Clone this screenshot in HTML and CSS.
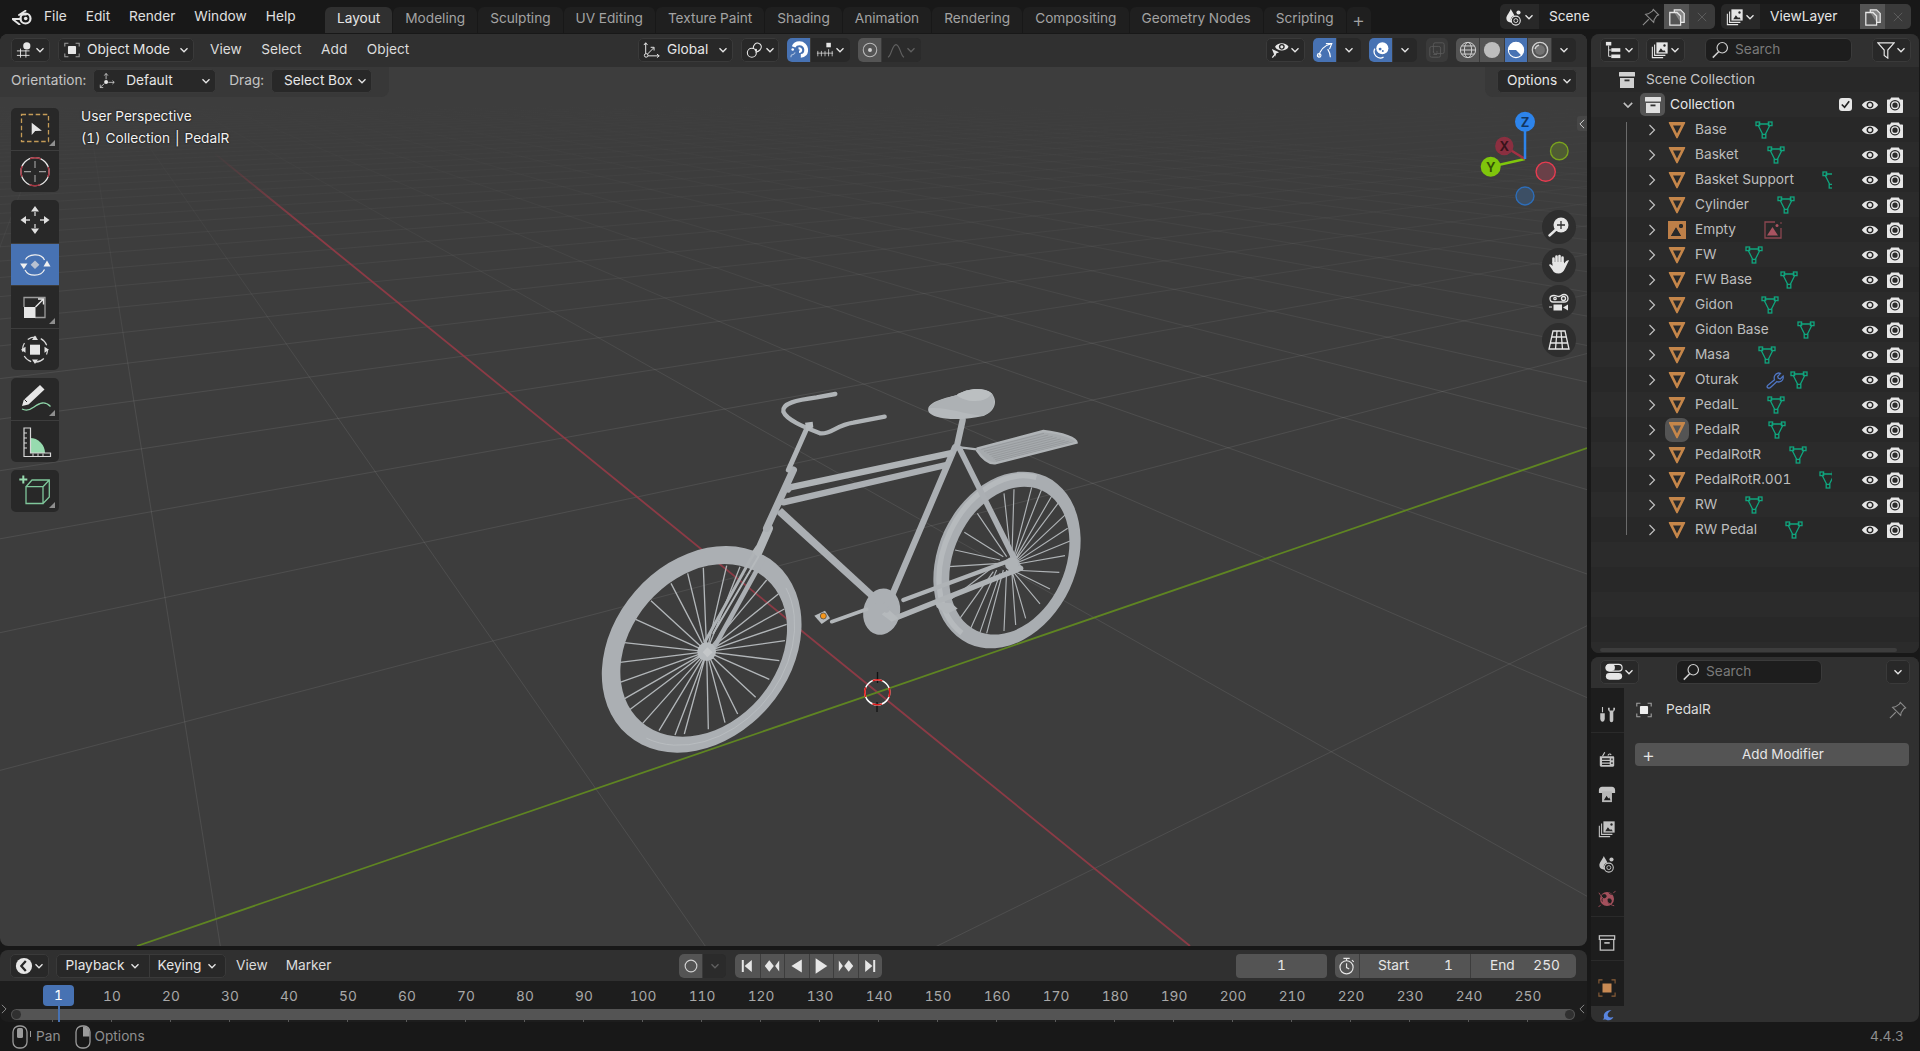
FILE: index.html
```html
<!DOCTYPE html>
<html lang="en">
<head>
<meta charset="utf-8">
<title>Blender</title>
<link rel="stylesheet" href="styles.css">
</head>
<body>
<svg class="defs" aria-hidden="true">
  <symbol id="chev-d" viewBox="0 0 10 10"><path d="M1.5 3.2 5 6.8l3.5-3.6" fill="none" stroke="currentColor" stroke-width="1.3"/></symbol>
  <symbol id="chev-r" viewBox="0 0 12 12"><path d="M3.5 1 8.5 6l-5 5" fill="none" stroke="currentColor" stroke-width="1.2"/></symbol>
  <symbol id="logo" viewBox="0 0 22 15"><circle cx="13.5" cy="8.5" r="5" fill="none" stroke="currentColor" stroke-width="2.2"/><circle cx="13.7" cy="8.5" r="1.8" fill="currentColor"/><path d="M.5 9h8M8 4.5h6M13.5 .8 7 5M.8 9.3 7.5 14.5" fill="none" stroke="currentColor" stroke-width="1.9" stroke-linecap="round"/></symbol>
  <symbol id="view3d" viewBox="0 0 20 20"><circle cx="12" cy="5.5" r="4" fill="currentColor"/><path d="M1 11h14M1 16h14M5 8.5v10M11 10v8.5" fill="none" stroke="currentColor" stroke-width="1"/></symbol>
  <symbol id="objmode" viewBox="0 0 20 20"><rect x="5.5" y="5.5" width="9" height="9" rx="1" fill="currentColor"/><path d="M2 6V2.5h4M14 2.5h4V6M18 14v3.5h-4M6 17.5H2V14" fill="none" stroke="currentColor" stroke-opacity=".6" stroke-width="1.2"/></symbol>
  <symbol id="orient" viewBox="0 0 20 20"><circle cx="9" cy="11" r="2.2" fill="currentColor"/><path d="M9 8V2M7 4l2-2.5L11 4M11.5 11.5H18M16 9.6l2 1.9-2 1.9M7 13l-4.5 4M2.5 14v3.3h3.3" fill="none" stroke="currentColor" stroke-opacity=".8" stroke-width="1"/></symbol>
  <symbol id="global" viewBox="0 0 20 20"><circle cx="3.5" cy="16" r="2" fill="none" stroke="currentColor" stroke-width="1.1"/><path d="M3 14V2M1 4.5 3 2l2 2.5M5.5 16.5H18M15.5 14.5 18 16.5l-2.5 2M5 14.5 12 7.5M8.500 7h3.800v3.600" fill="none" stroke="currentColor" stroke-width="1.1"/></symbol>
  <symbol id="pivot" viewBox="0 0 20 20"><circle cx="6.500" cy="13" r="5" fill="none" stroke="currentColor" stroke-width="1.2"/><path d="M8 8.500C8 4 11 1.500 14 2.500c3.500 1 4 5 1.500 7.500-1.200 1.200-3 2-5 2.500" fill="none" stroke="currentColor" stroke-width="1.200"/><circle cx="11" cy="10" r="1.300" fill="currentColor"/></symbol>
  <symbol id="magnet" viewBox="0 0 20 20"><path d="M12 16.500c4 0 6-3 6-6.500 0-4.500-3.500-7.500-7.500-7.500C7.500 2.500 5 4 4 6.500" fill="none" stroke="currentColor" stroke-width="4.200"/><path d="M9.500 8.500c1.500-.5 2.800 0 2.800 1.600 0 1.300-1 1.900-2.300 2" fill="none" stroke="currentColor" stroke-width="2.500"/><circle cx="3" cy="9.500" r="1.400" fill="currentColor"/><path d="M1 18c0-2 1-3 2.500-3 1 0 1-2 2.500-2" fill="none" stroke="currentColor" stroke-opacity=".55" stroke-width="1.200"/></symbol>
  <symbol id="snapgrid" viewBox="0 0 20 20"><rect x="11.500" y="2" width="5" height="5" fill="currentColor"/><path d="M1 13.500h18M2 11v6M6 11v6M10 11v6M14 9v8M18 11v6" fill="none" stroke="currentColor" stroke-opacity=".8" stroke-width="1"/></symbol>
  <symbol id="prop" viewBox="0 0 20 20"><circle cx="10" cy="10" r="7.500" fill="none" stroke="currentColor" stroke-width="1.200" stroke-opacity=".8"/><circle cx="10" cy="10" r="2.200" fill="currentColor"/></symbol>
  <symbol id="falloff" viewBox="0 0 20 20"><path d="M1 18c4-1 4.500-14 9-14s5 13 9 14" fill="none" stroke="currentColor" stroke-width="1.200"/></symbol>
  <symbol id="vis" viewBox="0 0 20 20"><path fill-rule="evenodd" d="M4.500 6.500C7 1 17 1 19.500 6.500 17 12 7 12 4.500 6.500ZM12 3.200a3.300 3.300 0 1 0 .01 0Z" fill="currentColor"/><circle cx="12" cy="6.500" r="1.700" fill="currentColor"/><path d="M1 9l8 3.500-3.200 1.500-1.300 3.500Z" fill="currentColor"/><path d="M5 14l-3.500 4.500" stroke="currentColor" stroke-width="1.500"/></symbol>
  <symbol id="gizmo" viewBox="0 0 20 20"><path d="M3 18C4 10 9 5 17 3M11 3h6.500L15 9M13 9c2 3 3 6 3 9" fill="none" stroke="currentColor" stroke-width="1.300"/><circle cx="3.500" cy="16" r="2" fill="none" stroke="currentColor" stroke-width="1.200"/></symbol>
  <symbol id="overlay" viewBox="0 0 20 20"><circle cx="11.500" cy="8" r="6.700" fill="currentColor"/><circle cx="9" cy="9" r="1.600" fill="#4772b3"/><circle cx="12" cy="11" r="1.100" fill="#4772b3"/><path d="M3.200 8.500a7 7 0 0 0 9.600 9.400" fill="none" stroke="currentColor" stroke-width="1.400"/></symbol>
  <symbol id="xray" viewBox="0 0 20 20"><rect x="6" y="2" width="12" height="12" rx="2" fill="none" stroke="currentColor"/><rect x="2" y="6" width="12" height="12" rx="2" fill="none" stroke="currentColor"/><path d="M6 11v2M10 11v2M6 15h4" stroke="currentColor"/></symbol>
  <symbol id="wire" viewBox="0 0 20 20"><g fill="none" stroke="currentColor" stroke-width="1.100"><circle cx="10" cy="10" r="8.500"/><ellipse cx="10" cy="10" rx="4" ry="8.500"/><path d="M1.500 10h17M3 5.500h14M3 14.500h14"/></g></symbol>
  <symbol id="solid" viewBox="0 0 20 20"><circle cx="10" cy="10" r="9" fill="currentColor" fill-opacity=".85"/></symbol>
  <symbol id="material" viewBox="0 0 20 20"><circle cx="10" cy="10" r="8.500" fill="none" stroke="currentColor" stroke-width="1.200"/><path d="M10 1.500a8.500 8.500 0 0 0-8.500 8.500h8.500l6 6A8.500 8.500 0 0 0 10 1.500Z" fill="currentColor"/></symbol>
  <symbol id="rendered" viewBox="0 0 20 20"><circle cx="10" cy="10" r="8.500" fill="none" stroke="currentColor" stroke-width="1.500"/><circle cx="10" cy="10" r="5.500" fill="currentColor" fill-opacity=".25"/><path d="M4.500 9a5.500 5.500 0 0 1 4.500-4.500" fill="none" stroke="currentColor" stroke-width="1.500"/></symbol>
  <symbol id="scene" viewBox="0 0 20 20"><path d="M6.500 1C5 5 1.500 8 1.500 11.500c0 3 2 4.500 4.500 4.500.5 0 1 0 1.500-.2C6.500 14.500 6.200 13 6.500 12c.4-1.500 2-3.400 4-3.800C9.500 6 7.500 3.500 6.500 1Z" fill="currentColor"/><circle cx="12" cy="14" r="5" fill="none" stroke="currentColor" stroke-width="1.200"/><circle cx="12" cy="14" r="2.200" fill="none" stroke="currentColor"/><circle cx="15" cy="5" r="2.300" fill="currentColor"/></symbol>
  <symbol id="pin" viewBox="0 0 20 20"><path d="M12.500 1.500 18.500 7.500 16.500 8.500 13.500 13 13 16 4 7 7 6.500 11.500 3.500ZM7.500 12.500 1 19" fill="none" stroke="currentColor" stroke-width="1.200"/></symbol>
  <symbol id="copy" viewBox="0 0 20 20"><path d="M7 5V2h7l4 4v10h-4" fill="currentColor" fill-opacity=".35"/><path d="M7 5V2h7l4 4v10h-4M2 5h8l4 4v10H2Z" fill="none" stroke="currentColor" stroke-width="1.400"/></symbol>
  <symbol id="xmark" viewBox="0 0 20 20"><path d="M4 4 16 16M16 4 4 16" stroke="currentColor" stroke-width="1.400"/></symbol>
  <symbol id="vlayer" viewBox="0 0 20 20"><rect x="6" y="1.500" width="12.500" height="12.500" fill="currentColor"/><path d="M8 12.500 11 8l2.500 3 1-1 2 2.500Z" fill="#282828"/><circle cx="15" cy="5" r="1.300" fill="#282828"/><path d="M4 4v12h12M1.500 6.500v12h12" fill="none" stroke="currentColor" stroke-width="1.200"/></symbol>
  <symbol id="outl" viewBox="0 0 20 20"><rect x="1" y="1" width="6" height="4" fill="currentColor"/><rect x="7" y="8" width="10" height="4" fill="currentColor"/><rect x="7" y="15" width="10" height="4" fill="currentColor"/><path d="M4 5v12h3M4 10h3" fill="none" stroke="currentColor"/></symbol>
  <symbol id="search" viewBox="0 0 20 20"><circle cx="12.500" cy="7.500" r="5.800" fill="none" stroke="currentColor" stroke-width="1.300"/><path d="M8.500 12 2 18.500" stroke="currentColor" stroke-width="1.700"/></symbol>
  <symbol id="funnel" viewBox="0 0 20 20"><path d="M1 2h18l-7 8v9l-4-3v-6Z" fill="none" stroke="currentColor" stroke-width="1.300"/></symbol>
  <symbol id="coll" viewBox="0 0 18 18"><rect x="1" y="1" width="16" height="4.500" rx=".5" fill="currentColor"/><path d="M2 7h14v10H2Z" fill="currentColor"/><rect x="6.500" y="8.500" width="5" height="1.800" fill="#303030"/></symbol>
  <symbol id="obj" viewBox="0 0 18 18"><path fill-rule="evenodd" d="M1.500 1h15c.6 0 .9.500.7 1L9.700 17c-.3.600-1.100.600-1.400 0L.8 2c-.2-.5.100-1 .7-1ZM5 4.500 9 12.500 13 4.500Z" fill="#c5864a"/></symbol>
  <symbol id="empty" viewBox="0 0 18 18"><path fill-rule="evenodd" d="M0 0h18v18H0ZM3 15h10L8 6.500Z M13 3a2 2 0 1 0 .01 0Z" fill="#bd7f48"/><path d="M8 6.500 3 15h10Z" fill="#2a2a2a"/><circle cx="13" cy="5" r="2" fill="#2a2a2a"/></symbol>
  <symbol id="meshd" viewBox="0 0 18 18"><g fill="none" stroke="#10a57e" stroke-width="1.300"><path d="M3.500 3h11M3 4l5 10M15 4l-5 10"/><rect x="1" y="1" width="3.600" height="3.600"/><rect x="13.400" y="1" width="3.600" height="3.600"/><rect x="7.200" y="13.400" width="3.600" height="3.600"/></g></symbol>
  <symbol id="imgd" viewBox="0 0 18 18"><path d="M11 1H1v16h16V7" fill="none" stroke="#8c4650" stroke-width="1.300"/><path d="M3 14.500h11L8.500 6Z" fill="#a85360"/><circle cx="13" cy="4.500" r="1.500" fill="#a85360"/><path d="M17 1v2" stroke="#8c4650"/></symbol>
  <symbol id="wrench" viewBox="0 0 18 18"><path d="M1.500 16.500c-1-1 0-2 1-2.800L8.500 8.800c-1-3 .5-6.300 4-6.800.7 0 1.500 0 2 .3l-2.800 3 .6 2 2 .6 2.800-2.800c.6 2.800-1 5.200-3.700 5.800-1 .2-1.800 0-2.500-.3L5 16c-1.200 1.200-2.500 1.500-3.500.5Z" fill="none" stroke="#4f76c4" stroke-width="1.300"/></symbol>
  <symbol id="eye" viewBox="0 0 18 18"><path fill-rule="evenodd" d="M.8 9C3.800 3.300 14.200 3.300 17.200 9 14.200 14.700 3.800 14.700.8 9ZM9 5.500a3.500 3.500 0 1 0 .01 0Z" fill="#e6e6e6"/><circle cx="9" cy="9" r="2" fill="#e6e6e6"/></symbol>
  <symbol id="cam" viewBox="0 0 18 18"><path fill-rule="evenodd" d="M1 4.500c0-.6.400-1 1-1h2l1.200-2h7.600l1.200 2h2c.6 0 1 .4 1 1V16c0 .6-.4 1-1 1H2c-.6 0-1-.4-1-1ZM9 4a5.200 5.200 0 1 0 .01 0Z" fill="#e6e6e6"/><circle cx="9" cy="9.200" r="3.300" fill="none" stroke="#e6e6e6" stroke-width="1.300"/></symbol>
  <symbol id="sel" viewBox="0 0 48 42"><rect x="10.500" y="6.500" width="27" height="27" fill="none" stroke="#c49b57" stroke-width="1.300" stroke-dasharray="4.500 2.600"/><path d="M20.700 14.700V27l3.500-4 6.700-.3Z" fill="#e6e6e6"/></symbol>
  <symbol id="cursor" viewBox="0 0 48 42"><circle cx="24" cy="20.700" r="14" fill="none" stroke="#e8e8e8" stroke-width="1.300"/><circle cx="24" cy="20.700" r="14" fill="none" stroke="#a6323f" stroke-width="1.400" stroke-dasharray="11 11" stroke-dashoffset="5.500"/><path d="M24 10v7M24 24v7M13 20.700h7M28 20.700h7" stroke="#9a9a9a" stroke-width="1.200"/></symbol>
  <symbol id="move" viewBox="0 0 48 42"><g fill="#e0e0e0"><path d="M24 6l4 5.500h-8ZM24 34l4-5.500h-8ZM9.500 20l5.500-4v8ZM38.500 20l-5.500-4v8Z"/></g><path d="M24 12v4M24 24v4M15 20h4M29 20h4" stroke="#d0d0d0" stroke-width="1.300"/></symbol>
  <symbol id="rotate" viewBox="0 0 48 42"><path d="M14.500 15.500C17 10.500 30 8 33.500 16M33.500 25.500C30 33 17.500 33 14 26" fill="none" stroke="#f0f0f0" stroke-width="1.200"/><path d="M9 19.500h7.500L12.800 25ZM32.500 22.500H39.500L36 16.500Z" fill="#f0f0f0"/><path d="M24 16.500l4.400 4.300-4.400 4.300-4.400-4.300Z" fill="#b8c1d1"/></symbol>
  <symbol id="scale" viewBox="0 0 48 42"><path d="M13 21V11.500h21V31.500H24" fill="none" stroke="#9c9c9c" stroke-width="1.300"/><rect x="13" y="21" width="11.500" height="11" fill="#e6e6e6"/><path d="M24.500 21 32 13.500M27 13h5.500v5.500" fill="none" stroke="#e6e6e6" stroke-width="1.400"/></symbol>
  <symbol id="transf" viewBox="0 0 48 42"><circle cx="24" cy="20.700" r="12.500" fill="none" stroke="#d8d8d8" stroke-width="1.200" stroke-dasharray="9 4.700" stroke-dashoffset="4"/><rect x="19" y="15.700" width="10" height="10" fill="#e6e6e6"/><path d="M24 6.500l3 4.500h-6ZM24 35l3-4.500h-6ZM10 20.700l4.500-3v6ZM38 20.700l-4.500-3v6Z" fill="#e0e0e0"/></symbol>
  <symbol id="annot" viewBox="0 0 48 42"><path d="M29 7 33.500 11.500 17.500 26.500 11 28 12.700 22Z" fill="#e6e6e6"/><path d="M16 24 13.500 21.500" stroke="#282828"/><path d="M11 31c4 2 8 1 12-2 6-4.500 11-6 16.500-.5" fill="none" stroke="#8ed4a8" stroke-width="1.300"/></symbol>
  <symbol id="measure" viewBox="0 0 48 42"><path d="M19 32V17a15 15 0 0 1 15 15Z" fill="#97dbaf"/><path d="M13 7h6.500v25H39.500v3.500H13Z" fill="none" stroke="#d8d8d8" stroke-width="1.200"/><path d="M13 12h3M13 17h3M13 22h3M13 27h3M22 35h0v-2.500M27 35v-2.500M32 35v-2.500" stroke="#d8d8d8" stroke-width="1"/></symbol>
  <symbol id="addcube" viewBox="0 0 48 42"><path d="M12.300 5.500v8M8.300 9.500h8" stroke="#97dbaf" stroke-width="2"/><path d="M15 16.700h17V33.500H15ZM15 16.700 21 10H38.300V27L32 33.500M32 16.700 38.300 10" fill="none" stroke="#7fc79b" stroke-width="1.300"/></symbol>
  <symbol id="nzoom" viewBox="0 0 22 22"><circle cx="13" cy="9" r="7.500" fill="#e6e6e6"/><path d="M13 5v8M9 9h8" stroke="#2e2e2e" stroke-width="1.300"/><path d="M7.500 14 1.500 19.500" stroke="#e6e6e6" stroke-width="2.400" stroke-linecap="round"/></symbol>
  <symbol id="nhand" viewBox="0 0 22 22"><path d="M5.500 8.500V4.500M8.500 8V2.500M11.500 8V2M14.500 8.500V3.500" stroke="#e6e6e6" stroke-width="2.600" stroke-linecap="round"/><path d="M4.500 8h11.500v1.500c2-3 4-4 5-3-1 1.500-2.500 5-4 8-1.500 3.500-3.500 5-6.500 5-3.500 0-5-1.500-6-3.500L1 11c.5-1.500 2-1 3.500 1Z" fill="#e6e6e6"/></symbol>
  <symbol id="ncam" viewBox="0 0 22 22"><g fill="none" stroke="#e6e6e6" stroke-width="1.300"><path d="M2 7.500c0-2 2-3 4-3 1.500 0 3 1 5 1s2.500-2 5-2 4 2 4 4c0 2.500-2 3.500-4 3.500H5c-2 0-3-1.500-3-3.500Z"/><circle cx="7" cy="7.500" r="1.200" /><circle cx="15.500" cy="7.500" r="2"/></g><rect x="5.500" y="13.500" width="8.500" height="6" fill="#e6e6e6"/><path d="M15 16.500l5-3v6Z" fill="#e6e6e6"/><path d="M1 16h3" stroke="#e6e6e6"/></symbol>
  <symbol id="ngrid" viewBox="0 0 22 22"><path d="M5 2h12l4 18H1ZM3.800 8h14.400M2.500 14h17M9 2 7.500 20M13 2l1.500 18" fill="none" stroke="#e6e6e6" stroke-width="1.300"/></symbol>
  <symbol id="ptool" viewBox="0 0 20 20"><path d="M5 1v6" stroke="currentColor" stroke-width="1.200"/><path d="M2.500 8h5v6c0 2-1 3.500-2.500 3.500S2.500 16 2.500 14Z" fill="currentColor"/><path d="M11 2c0 3 1 4 2 4.500v9c0 1.500 1 2.500 2 2.500s2-1 2-2.500v-9c1-.5 2-1.500 2-4.500l-2 0v3h-4v-3Z" fill="currentColor"/></symbol>
  <symbol id="prender" viewBox="0 0 20 20"><path d="M2 7h14.500c1 0 1.500.5 1.500 1.500V17c0 1-.5 1.500-1.500 1.500H3.500C2.500 18.500 2 18 2 17Z" fill="currentColor"/><path d="M4.500 10H13M4.500 13H13M4.500 16H13M15.500 9.500v2M15.500 13.500v2" stroke="#1d1d1d" stroke-width="1.500"/><path d="M5 7 7.500 2.500M11 6c1-2 3-2 3.500-.5" fill="none" stroke="currentColor" stroke-width="1.300"/></symbol>
  <symbol id="poutput" viewBox="0 0 20 20"><path d="M4.500 2h11c2 0 3.500 1.500 3.500 3.500V9H1V5.500C1 3.500 2.500 2 4.500 2Z" fill="currentColor"/><rect x="4.500" y="7" width="11" height="12" fill="#b8b8b8"/><path d="M6.500 17 9.500 12 11.500 15l1-1 1.500 3Z" fill="#1d1d1d"/></symbol>
  <symbol id="pworld" viewBox="0 0 20 20"><circle cx="10" cy="10" r="7.800" fill="#a3505c"/><path d="M4 6c2-1 4-2 5 0s-1 3-3 3-2 3-1 4M11 10c2-1 4 0 4 2s-2 4-3 3-1-3-1-5ZM12 3c1 2 3 2 4 2" stroke="#1d1d1d" fill="#1d1d1d" stroke-width=".6"/><path d="M.5 19 3 16.500M17 3.500 19.500 1M1 3c2.500 5 12 14 17 14.500" fill="none" stroke="#a3505c" stroke-width="1"/></symbol>
  <symbol id="pcoll" viewBox="0 0 20 20"><g fill="none" stroke="currentColor" stroke-width="1.400"><rect x="1.500" y="2" width="17" height="4"/><path d="M2.500 6v12h15V6"/></g><rect x="7" y="9" width="6" height="1.800" fill="currentColor"/></symbol>
  <symbol id="pobj" viewBox="0 0 20 20"><rect x="5" y="5" width="10" height="10" fill="#c88a54"/><path d="M1 5V1h4M15 1h4v4M19 15v4h-4M5 19H1v-4" fill="none" stroke="#8c5f38" stroke-width="1.200"/></symbol>
  <symbol id="pmod" viewBox="0 0 20 20"><path d="M14 1.500C8.500 1 4.500 5 5.500 9c.2 1-.5 2-1.500 3 2-.5 3-.5 4 0 3.500 1.500 7 0 8-3-2 1-5 .5-6-1s0-4.500 4-6.500Z" fill="#5885e0"/></symbol>
  <symbol id="ptoggle" viewBox="0 0 20 20"><rect x="1" y="1.500" width="18" height="7.500" rx="3.700" fill="none" stroke="currentColor" stroke-width="1.300"/><rect x="1" y="1.500" width="10" height="7.500" rx="3.700" fill="currentColor"/><rect x="1" y="11" width="18" height="7.500" rx="3.700" fill="currentColor"/></symbol>
  <symbol id="clock" viewBox="0 0 20 20"><circle cx="10" cy="10" r="9" fill="currentColor"/><path d="M12 4.500 7 10l5 5.500" fill="none" stroke="#282828" stroke-width="2.500"/></symbol>
  <symbol id="keyring" viewBox="0 0 20 20"><circle cx="10" cy="10" r="6.500" fill="none" stroke="currentColor" stroke-width="1.300"/></symbol>
  <symbol id="jumps" viewBox="0 0 20 20"><rect x="3.500" y="2.500" width="2.500" height="15" fill="currentColor"/><path d="M16 2.500v15L7 10Z" fill="currentColor"/></symbol>
  <symbol id="jumpe" viewBox="0 0 20 20"><rect x="14" y="2.500" width="2.500" height="15" fill="currentColor"/><path d="M4 2.500v15L13 10Z" fill="currentColor"/></symbol>
  <symbol id="prevk" viewBox="0 0 20 20"><path d="M7 3.500l5 6.500-5 6.500L2 10Z" fill="currentColor"/><path d="M18 4v12l-4.500-6Z" fill="currentColor"/></symbol>
  <symbol id="nextk" viewBox="0 0 20 20"><path d="M13 3.500l5 6.500-5 6.500L8 10Z" fill="currentColor"/><path d="M2 4v12l4.500-6Z" fill="currentColor"/></symbol>
  <symbol id="playr" viewBox="0 0 20 20"><path d="M16 2v16L3 10Z" fill="currentColor"/></symbol>
  <symbol id="play" viewBox="0 0 20 20"><path d="M4 1.500v17L17 10Z" fill="currentColor"/></symbol>
  <symbol id="timer" viewBox="0 0 20 20"><circle cx="9.500" cy="11.500" r="7.300" fill="none" stroke="currentColor" stroke-width="1.300"/><path d="M6 1.500h7M9.500 1.500v3M9.500 7v4.800l3 1.500M15.500 3.500l2 2" fill="none" stroke="currentColor" stroke-width="1.300"/></symbol>
  <symbol id="mousel" viewBox="0 0 20 24"><rect x="3" y="1" width="14" height="22" rx="6" fill="none" stroke="currentColor" stroke-width="1.300"/><rect x="7" y="3" width="6" height="10" rx="1.500" fill="currentColor"/></symbol>
  <symbol id="mouser" viewBox="0 0 20 24"><rect x="3" y="1" width="14" height="22" rx="6" fill="none" stroke="currentColor" stroke-width="1.300"/><path d="M10 1.500h1c3 0 5.500 2.500 5.500 5.500v4.500H10Z" fill="currentColor"/></symbol>
</svg>

<header class="topbar">
  <svg class="logo"><use href="#logo"/></svg>
  <nav class="menus">
    <span>File</span><span>Edit</span><span>Render</span><span>Window</span><span>Help</span>
  </nav>
  <nav class="tabs">
    <span class="tab active">Layout</span><span class="tab">Modeling</span><span class="tab">Sculpting</span><span class="tab">UV Editing</span><span class="tab">Texture Paint</span><span class="tab">Shading</span><span class="tab">Animation</span><span class="tab">Rendering</span><span class="tab">Compositing</span><span class="tab">Geometry Nodes</span><span class="tab">Scripting</span><span class="tab-add">+</span>
  </nav>
  <div class="scene-groups">
    <div class="sgroup">
      <span class="sicon w39"><svg class="i18"><use href="#scene"/></svg><svg class="i10"><use href="#chev-d"/></svg></span>
      <span class="sfield w125">Scene<svg class="i18 dim pinend"><use href="#pin"/></svg></span>
      <span class="scopy"><svg class="i18"><use href="#copy"/></svg></span>
      <span class="sx"><svg class="i14"><use href="#xmark"/></svg></span>
    </div>
    <div class="sgroup">
      <span class="sicon w39"><svg class="i18"><use href="#vlayer"/></svg><svg class="i10"><use href="#chev-d"/></svg></span>
      <span class="sfield w100">ViewLayer</span>
      <span class="scopy"><svg class="i18"><use href="#copy"/></svg></span>
      <span class="sx"><svg class="i14"><use href="#xmark"/></svg></span>
    </div>
  </div>
</header>

<main class="workspace">
  <div class="leftcol">
    <section class="viewport">
      <svg class="canvas" viewBox="0 34 1587 912" id="canvas">
        <defs>
          <linearGradient id="fade" gradientUnits="userSpaceOnUse" x1="0" y1="95" x2="0" y2="400">
            <stop offset="0" stop-color="#fff" stop-opacity="0"/>
            <stop offset=".3" stop-color="#fff" stop-opacity=".022"/>
            <stop offset="1" stop-color="#fff" stop-opacity=".085"/>
          </linearGradient>
          <linearGradient id="redfade" gradientUnits="userSpaceOnUse" x1="214" y1="153" x2="300" y2="223">
            <stop offset="0" stop-color="#8c3a45" stop-opacity="0"/>
            <stop offset="1" stop-color="#8c3a45"/>
          </linearGradient>
        </defs>
        <g id="grid" fill="none" stroke="url(#fade)" stroke-width="1"></g>
        <path d="M214 153 877.300 692.300 1190 946" fill="none" stroke="url(#redfade)" stroke-width="1.800"/>
        <path d="M137 946 877.300 692.300 1587 448" fill="none" stroke="#5f8522" stroke-width="1.800"/>

        <!-- rear half of the bicycle, coordinates of a 3x crop -->
        <g transform="translate(780 370) scale(.33333)">
          <path d="M695 585 672 370M695 585 702 358M695 585 755 352M695 585 785 358M695 585 817 375M695 585 838 395M695 585 857 433M695 585 863 475M695 585 870 513M695 585 855 557M695 600 838 607M695 600 810 657M695 600 780 702M695 600 737 745M695 600 707 765M680 600 672 783M670 600 620 790M660 610 600 787M650 600 570 780M640 605 535 752M640 590 510 690M660 580 507 590M660 570 525 540M670 560 553 487M680 560 592 430" stroke="#afb3b6" stroke-width="3.500" fill="none"/>
          <g transform="translate(681 570) rotate(-65)">
            <path fill-rule="evenodd" d="M-276 0A276 207 0 1 0 276 0A276 207 0 1 0 -276 0ZM-230.850 7.200A232 167 0 1 1 233.150 7.200A232 167 0 1 1 -230.850 7.200Z" fill="#a9adb1"/>
            <path d="M-256 -30A262 192 0 0 1 262 -25" fill="none" stroke="#b6babd" stroke-width="16"/>
          </g>
          <!-- rack -->
          <path d="M590 236 790 183C850 190 890 205 890 218L645 280C620 282 600 255 590 240Z" fill="#a6aaad"/>
          <path d="M604 238 792 190M612 244 805 195M620 249 818 199M628 254 830 203M635 259 842 207M640 264 854 211M645 269 866 214M648 274 878 217" stroke="#8f9295" stroke-width="2" fill="none"/>
          <path d="M590 236 790 183C850 190 890 205 890 218L645 280C620 282 600 255 590 240M540 232 590 238" stroke="#b0b4b7" stroke-width="7" fill="none"/>
          <g fill="none" stroke-linecap="round">
            <path d="M548 150 530 232" stroke="#acb0b3" stroke-width="19"/>
            <path d="M525 232 330 690" stroke="#abafb3" stroke-width="19"/>
            <path d="M30 352 510 250" stroke="#afb3b6" stroke-width="19"/>
            <path d="M10 397 498 285" stroke="#abafb3" stroke-width="19"/>
            <path d="M538 235 715 590" stroke="#abafb3" stroke-width="17"/>
            <path d="M370 690 680 575" stroke="#afb3b6" stroke-width="13"/>
          </g>
          <ellipse cx="305" cy="725" rx="55" ry="70" transform="rotate(12 305 725)" fill="#abafb3"/>
          <path d="M0 420 320 715" stroke="#abafb3" stroke-width="17"/>
          <path d="M345 745 722 595" stroke="#afb3b6" stroke-width="16" stroke-linecap="round"/>
          <path d="M305 733 325 718 355 745 335 755Z" fill="#b5b9bc"/>
          <path d="M465 697 515 700 533 716 500 732 470 712Z" fill="#b2b6b9"/>
          <circle cx="695" cy="582" r="20" fill="#afb3b6"/>
          <path d="M445 115C450 95 490 85 530 75 560 55 610 50 635 70 655 95 645 125 610 138 560 150 500 150 470 140 450 135 442 125 445 115Z" fill="#b5b9bc"/>
          <path d="M445 115C500 110 540 130 610 138 640 125 650 100 635 70 620 100 560 100 530 75 500 85 460 92 445 115Z" fill="#adb1b4"/>
          <path d="M530 75C560 100 620 100 635 70 610 50 560 55 530 75Z" fill="#bbbfc1"/>
          <path d="M103 737 135 722 150 745 125 762Z" fill="#b6babd"/>
          <path d="M155 755 260 718" stroke="#b2b6b9" stroke-width="11" stroke-linecap="round"/>
          <circle cx="130" cy="738" r="9" fill="#f5961c" stroke="#3d3d3d" stroke-width="2"/>
        </g>

        <!-- front half of the bicycle -->
        <g transform="translate(590 370) scale(.33333)">
          <path d="M350 845 340 593M350 845 293 610M350 845 243 640M350 845 183 692M350 845 137 748M350 845 103 818M350 845 90 877M350 845 90 937M350 845 100 988M350 845 118 1020M350 845 158 1060M350 845 207 1082M350 845 255 1095M350 845 283 1092M350 845 355 1078M350 845 405 1058M350 845 443 1032M350 845 497 982M350 845 538 928M350 845 568 872M350 845 585 812M350 845 590 763M350 845 583 717M350 845 565 672M350 845 530 630M350 845 450 590M350 845 410 587" stroke="#b2b6b9" stroke-width="4" fill="none"/>
          <g transform="translate(335 838) rotate(-49)">
            <path fill-rule="evenodd" d="M-340 0A340 265 0 1 0 340 0A340 265 0 1 0 -340 0ZM-283.300 6.500A285 220 0 1 1 286.700 6.500A285 220 0 1 1 -283.300 6.500Z" fill="#abafb3"/>
            <path d="M-310 50A318 248 0 0 0 305 70" fill="none" stroke="#bec2c4" stroke-width="2"/>
          </g>
          <g fill="none" stroke-linecap="round">
            <path d="M345 815 500 535" stroke="#afb3b6" stroke-width="9"/>
            <path d="M375 828 520 565" stroke="#abafb3" stroke-width="14"/>
            <path d="M370 790 505 560" stroke="#b5b9bc" stroke-width="6"/>
            <path d="M520 525 500 530 490 545" stroke="#b2b6b9" stroke-width="6"/>
            <path d="M536 475 505 545" stroke="#b2b6b9" stroke-width="26"/>
            <path d="M610 300 530 475" stroke="#abafb3" stroke-width="22"/>
            <path d="M652 172 595 300" stroke="#afb3b6" stroke-width="15"/>
            <path d="M595 360 600 352M570 430 890 720" stroke="#abafb3" stroke-width="16"/>
            <path d="M736 72 680 82C620 90 575 100 580 125 590 150 640 170 690 190 720 195 740 165 790 158L884 140" stroke="#afb3b6" stroke-width="13"/>
          </g>
          <path d="M645 158 668 155 670 172 650 185Z" fill="#b6babd"/>
          <circle cx="350" cy="845" r="28" fill="#b6babd"/>
          <path d="M352 832 368 847 352 862 338 847Z" fill="#c4c7c9"/>
        </g>

        <!-- 3D cursor -->
        <g fill="none">
          <path d="M877.500 672V683M877 702V712" stroke="#111" stroke-width="1.300"/>
          <circle cx="877.300" cy="692.300" r="12.500" stroke="#fff" stroke-width="1.500"/>
          <circle cx="877.300" cy="692.300" r="12.500" stroke="#e01818" stroke-width="1.600" stroke-dasharray="9.800 9.800" stroke-dashoffset="4.900"/>
        </g>
      </svg>

      <div class="vp-header">
        <div class="hleft">
          <button class="btn w39"><svg class="i18"><use href="#view3d"/></svg><svg class="i10"><use href="#chev-d"/></svg></button>
          <button class="btn w136"><svg class="i18"><use href="#objmode"/></svg><span class="grow">Object Mode</span><svg class="i10"><use href="#chev-d"/></svg></button>
          <span class="hm first">View</span><span class="hm">Select</span><span class="hm">Add</span><span class="hm">Object</span>
        </div>
        <div class="hcenter">
          <button class="btn w95"><svg class="i18"><use href="#global"/></svg><span class="grow">Global</span><svg class="i10"><use href="#chev-d"/></svg></button>
          <button class="btn w38"><svg class="i18"><use href="#pivot"/></svg><svg class="i10"><use href="#chev-d"/></svg></button>
          <div class="seg">
            <span class="sb w23 blue"><svg class="i18"><use href="#magnet"/></svg></span>
            <span class="sb w40"><svg class="i18"><use href="#snapgrid"/></svg><svg class="i10"><use href="#chev-d"/></svg></span>
          </div>
          <div class="seg dimmed">
            <span class="sb w23 gray"><svg class="i18"><use href="#prop"/></svg></span>
            <span class="sb w40 faint"><svg class="i18"><use href="#falloff"/></svg><svg class="i10"><use href="#chev-d"/></svg></span>
          </div>
        </div>
        <div class="hright">
          <button class="btn w39"><svg class="i18"><use href="#vis"/></svg><svg class="i10"><use href="#chev-d"/></svg></button>
          <div class="seg">
            <span class="sb w23 blue"><svg class="i18"><use href="#gizmo"/></svg></span>
            <span class="sb w25"><svg class="i10"><use href="#chev-d"/></svg></span>
          </div>
          <div class="seg">
            <span class="sb w23 blue"><svg class="i18"><use href="#overlay"/></svg></span>
            <span class="sb w25"><svg class="i10"><use href="#chev-d"/></svg></span>
          </div>
          <div class="seg x1"><span class="sb w22 xdim"><svg class="i18"><use href="#xray"/></svg></span></div>
          <div class="seg">
            <span class="sb w23 gray"><svg class="i18"><use href="#wire"/></svg></span>
            <span class="sb w25 gray"><svg class="i18"><use href="#solid"/></svg></span>
            <span class="sb w23 blue"><svg class="i18"><use href="#material"/></svg></span>
            <span class="sb w24 gray"><svg class="i18"><use href="#rendered"/></svg></span>
            <span class="sb w25"><svg class="i10"><use href="#chev-d"/></svg></span>
          </div>
        </div>
      </div>

      <div class="vp-settings">
        <div class="toolstrip">
          <span class="lbl">Orientation:</span>
          <button class="btn w123 orient-btn"><svg class="i18"><use href="#orient"/></svg><span class="grow">Default</span><svg class="i10"><use href="#chev-d"/></svg></button>
          <span class="lbl drag">Drag:</span>
          <button class="btn w101"><span class="grow">Select Box</span><svg class="i10"><use href="#chev-d"/></svg></button>
        </div>
        <div class="optstrip">
          <button class="btn w80"><span class="grow">Options</span><svg class="i10"><use href="#chev-d"/></svg></button>
        </div>
      </div>

      <div class="vp-body">
        <aside class="toolbar">
          <div class="tgroup">
            <span class="tool corner"><svg class="ti"><use href="#sel"/></svg></span>
            <span class="tool"><svg class="ti"><use href="#cursor"/></svg></span>
          </div>
          <div class="tgroup g2">
            <span class="tool"><svg class="ti"><use href="#move"/></svg></span>
            <span class="tool on"><svg class="ti"><use href="#rotate"/></svg></span>
            <span class="tool corner"><svg class="ti"><use href="#scale"/></svg></span>
            <span class="tool"><svg class="ti"><use href="#transf"/></svg></span>
          </div>
          <div class="tgroup">
            <span class="tool corner"><svg class="ti"><use href="#annot"/></svg></span>
            <span class="tool"><svg class="ti"><use href="#measure"/></svg></span>
          </div>
          <div class="tgroup">
            <span class="tool corner"><svg class="ti"><use href="#addcube"/></svg></span>
          </div>
        </aside>
        <div class="viewinfo">
          <div>User Perspective</div>
          <div class="ctx">(1) Collection | PedalR</div>
        </div>
      </div>

      <div class="gizmo">
        <svg viewBox="0 0 100 120" class="gizmo-svg">
          <path d="M35 69 0.700 76.700" stroke="#7fc60c" stroke-width="2.500"/>
          <path d="M35 69 14 56" stroke="#a33043" stroke-width="2.500"/>
          <path d="M35 69V31" stroke="#2d84eb" stroke-width="2.500"/>
          <circle cx="35" cy="31.700" r="10" fill="#2d84eb"/>
          <text x="35" y="36.500" class="gt">Z</text>
          <circle cx="14.300" cy="56" r="9.200" fill="#8b2f40"/>
          <text x="14.300" y="60.500" class="gt">X</text>
          <circle cx="0.700" cy="76.700" r="10" fill="#7fc60c"/>
          <text x="0.700" y="81.500" class="gt">Y</text>
          <circle cx="55.700" cy="81.700" r="9.600" fill="#6a4048" stroke="#e63c50" stroke-width="1.400"/>
          <circle cx="69.300" cy="61" r="8.800" fill="#4f5c33" stroke="#7aa31e" stroke-width="1.400"/>
          <circle cx="35" cy="106" r="9" fill="#3c4f65" stroke="#2d6db8" stroke-width="1.400"/>
        </svg>
      </div>
      <div class="navbtns">
        <span class="nav"><svg class="i22"><use href="#nzoom"/></svg></span>
        <span class="nav"><svg class="i22"><use href="#nhand"/></svg></span>
        <span class="nav"><svg class="i22"><use href="#ncam"/></svg></span>
        <span class="nav"><svg class="i22"><use href="#ngrid"/></svg></span>
      </div>
      <span class="sidetab"><svg class="i10"><use href="#chev-r"/></svg></span>
    </section>

    <section class="timeline">
      <div class="tl-header">
        <button class="btn w39"><svg class="i18 bright"><use href="#clock"/></svg><svg class="i10"><use href="#chev-d"/></svg></button>
        <div class="seg outline tl-menus">
          <span class="sb w92">Playback<svg class="i10"><use href="#chev-d"/></svg></span>
          <span class="sb w76">Keying<svg class="i10"><use href="#chev-d"/></svg></span>
        </div>
        <span class="hm tl-first">View</span><span class="hm tl-second">Marker</span>
        <div class="seg tl-key">
          <span class="sb w23 gray"><svg class="i18"><use href="#keyring"/></svg></span>
          <span class="sb w24 faint2"><svg class="i10"><use href="#chev-d"/></svg></span>
        </div>
        <div class="seg tl-trans">
          <span class="sb w245 gray2"><svg class="i16"><use href="#jumps"/></svg></span>
          <span class="sb w245 gray2"><svg class="i18"><use href="#prevk"/></svg></span>
          <span class="sb w245 gray2"><svg class="i16"><use href="#playr"/></svg></span>
          <span class="sb w245 gray2"><svg class="i18"><use href="#play"/></svg></span>
          <span class="sb w245 gray2"><svg class="i18"><use href="#nextk"/></svg></span>
          <span class="sb w245 gray2"><svg class="i16"><use href="#jumpe"/></svg></span>
        </div>
        <span class="frame-cur">1</span>
        <div class="seg tl-range">
          <span class="sb w24 gray2"><svg class="i18"><use href="#timer"/></svg></span>
          <span class="sb w111 gray2 spread"><span>Start</span><span>1</span></span>
          <span class="sb w106 gray2 spread"><span>End</span><span>250</span></span>
        </div>
      </div>
      <div class="tl-main">
        <div class="frames">
          <span>10</span><span>20</span><span>30</span><span>40</span><span>50</span><span>60</span><span>70</span><span>80</span><span>90</span><span>100</span><span>110</span><span>120</span><span>130</span><span>140</span><span>150</span><span>160</span><span>170</span><span>180</span><span>190</span><span>200</span><span>210</span><span>220</span><span>230</span><span>240</span><span>250</span>
        </div>
        <span class="badge">1</span>
        <span class="playhead"></span>
        <div class="hscroll"></div>
        <div class="ticks"></div>
        <svg class="i10 tl-chev-l"><use href="#chev-r"/></svg>
        <svg class="i10 tl-chev-r"><use href="#chev-r"/></svg>
      </div>
    </section>
  </div>

  <div class="rightcol">
    <section class="outliner">
      <div class="ed-header">
        <button class="btn w39"><svg class="i18"><use href="#outl"/></svg><svg class="i10"><use href="#chev-d"/></svg></button>
        <button class="btn w39 gap7"><svg class="i18"><use href="#vlayer"/></svg><svg class="i10"><use href="#chev-d"/></svg></button>
        <div class="searchbox s147 gap20"><svg class="i18"><use href="#search"/></svg><span>Search</span></div>
        <button class="btn w39 right"><svg class="i18"><use href="#funnel"/></svg><svg class="i10"><use href="#chev-d"/></svg></button>
      </div>
      <div class="tree">
        <div class="row"><svg class="i18 sc-ic"><use href="#coll"/></svg><span class="name sc">Scene Collection</span></div>
        <div class="row">
          <div class="rmain coll">
            <svg class="chev cd"><use href="#chev-d"/></svg>
            <span class="collbox"><svg class="i18"><use href="#coll"/></svg></span>
            <span class="name bright">Collection</span>
          </div>
          <div class="rend"><span class="check"><svg viewBox="0 0 14 14"><path d="M3 7 6 10 11 3.500" fill="none" stroke="#222" stroke-width="1.800"/></svg></span><svg class="i18 eye tight"><use href="#eye"/></svg><svg class="i18 cam"><use href="#cam"/></svg></div>
        </div>
        <div class="row"><div class="rmain"><svg class="chev"><use href="#chev-r"/></svg><svg class="i18"><use href="#obj"/></svg><span class="name">Base</span><svg class="i18 data"><use href="#meshd"/></svg></div><div class="rend"><svg class="i18 eye"><use href="#eye"/></svg><svg class="i18 cam"><use href="#cam"/></svg></div></div>
        <div class="row"><div class="rmain"><svg class="chev"><use href="#chev-r"/></svg><svg class="i18"><use href="#obj"/></svg><span class="name">Basket</span><svg class="i18 data"><use href="#meshd"/></svg></div><div class="rend"><svg class="i18 eye"><use href="#eye"/></svg><svg class="i18 cam"><use href="#cam"/></svg></div></div>
        <div class="row"><div class="rmain"><svg class="chev"><use href="#chev-r"/></svg><svg class="i18"><use href="#obj"/></svg><span class="name">Basket Support</span><svg class="i18 data"><use href="#meshd"/></svg></div><div class="rend"><svg class="i18 eye"><use href="#eye"/></svg><svg class="i18 cam"><use href="#cam"/></svg></div></div>
        <div class="row"><div class="rmain"><svg class="chev"><use href="#chev-r"/></svg><svg class="i18"><use href="#obj"/></svg><span class="name">Cylinder</span><svg class="i18 data"><use href="#meshd"/></svg></div><div class="rend"><svg class="i18 eye"><use href="#eye"/></svg><svg class="i18 cam"><use href="#cam"/></svg></div></div>
        <div class="row"><div class="rmain"><svg class="chev"><use href="#chev-r"/></svg><svg class="i18"><use href="#empty"/></svg><span class="name">Empty</span><svg class="i18 data"><use href="#imgd"/></svg></div><div class="rend"><svg class="i18 eye"><use href="#eye"/></svg><svg class="i18 cam"><use href="#cam"/></svg></div></div>
        <div class="row"><div class="rmain"><svg class="chev"><use href="#chev-r"/></svg><svg class="i18"><use href="#obj"/></svg><span class="name">FW</span><svg class="i18 data"><use href="#meshd"/></svg></div><div class="rend"><svg class="i18 eye"><use href="#eye"/></svg><svg class="i18 cam"><use href="#cam"/></svg></div></div>
        <div class="row"><div class="rmain"><svg class="chev"><use href="#chev-r"/></svg><svg class="i18"><use href="#obj"/></svg><span class="name">FW Base</span><svg class="i18 data"><use href="#meshd"/></svg></div><div class="rend"><svg class="i18 eye"><use href="#eye"/></svg><svg class="i18 cam"><use href="#cam"/></svg></div></div>
        <div class="row"><div class="rmain"><svg class="chev"><use href="#chev-r"/></svg><svg class="i18"><use href="#obj"/></svg><span class="name">Gidon</span><svg class="i18 data"><use href="#meshd"/></svg></div><div class="rend"><svg class="i18 eye"><use href="#eye"/></svg><svg class="i18 cam"><use href="#cam"/></svg></div></div>
        <div class="row"><div class="rmain"><svg class="chev"><use href="#chev-r"/></svg><svg class="i18"><use href="#obj"/></svg><span class="name">Gidon Base</span><svg class="i18 data"><use href="#meshd"/></svg></div><div class="rend"><svg class="i18 eye"><use href="#eye"/></svg><svg class="i18 cam"><use href="#cam"/></svg></div></div>
        <div class="row"><div class="rmain"><svg class="chev"><use href="#chev-r"/></svg><svg class="i18"><use href="#obj"/></svg><span class="name">Masa</span><svg class="i18 data"><use href="#meshd"/></svg></div><div class="rend"><svg class="i18 eye"><use href="#eye"/></svg><svg class="i18 cam"><use href="#cam"/></svg></div></div>
        <div class="row"><div class="rmain"><svg class="chev"><use href="#chev-r"/></svg><svg class="i18"><use href="#obj"/></svg><span class="name">Oturak</span><svg class="i18 data mod"><use href="#wrench"/></svg><svg class="i18 data next"><use href="#meshd"/></svg></div><div class="rend"><svg class="i18 eye"><use href="#eye"/></svg><svg class="i18 cam"><use href="#cam"/></svg></div></div>
        <div class="row"><div class="rmain"><svg class="chev"><use href="#chev-r"/></svg><svg class="i18"><use href="#obj"/></svg><span class="name">PedalL</span><svg class="i18 data"><use href="#meshd"/></svg></div><div class="rend"><svg class="i18 eye"><use href="#eye"/></svg><svg class="i18 cam"><use href="#cam"/></svg></div></div>
        <div class="row"><div class="rmain"><svg class="chev"><use href="#chev-r"/></svg><svg class="i18 activebox"><use href="#obj"/></svg><span class="name">PedalR</span><svg class="i18 data"><use href="#meshd"/></svg></div><div class="rend"><svg class="i18 eye"><use href="#eye"/></svg><svg class="i18 cam"><use href="#cam"/></svg></div></div>
        <div class="row"><div class="rmain"><svg class="chev"><use href="#chev-r"/></svg><svg class="i18"><use href="#obj"/></svg><span class="name">PedalRotR</span><svg class="i18 data"><use href="#meshd"/></svg></div><div class="rend"><svg class="i18 eye"><use href="#eye"/></svg><svg class="i18 cam"><use href="#cam"/></svg></div></div>
        <div class="row"><div class="rmain"><svg class="chev"><use href="#chev-r"/></svg><svg class="i18"><use href="#obj"/></svg><span class="name">PedalRotR.001</span><svg class="i18 data"><use href="#meshd"/></svg></div><div class="rend"><svg class="i18 eye"><use href="#eye"/></svg><svg class="i18 cam"><use href="#cam"/></svg></div></div>
        <div class="row"><div class="rmain"><svg class="chev"><use href="#chev-r"/></svg><svg class="i18"><use href="#obj"/></svg><span class="name">RW</span><svg class="i18 data"><use href="#meshd"/></svg></div><div class="rend"><svg class="i18 eye"><use href="#eye"/></svg><svg class="i18 cam"><use href="#cam"/></svg></div></div>
        <div class="row"><div class="rmain"><svg class="chev"><use href="#chev-r"/></svg><svg class="i18"><use href="#obj"/></svg><span class="name">RW Pedal</span><svg class="i18 data"><use href="#meshd"/></svg></div><div class="rend"><svg class="i18 eye"><use href="#eye"/></svg><svg class="i18 cam"><use href="#cam"/></svg></div></div>
        <span class="treeline"></span>
      </div>
      <div class="outl-scroll"></div>
    </section>

    <section class="properties">
      <div class="ed-header phead">
        <button class="btn w39"><svg class="i18"><use href="#ptoggle"/></svg><svg class="i10"><use href="#chev-d"/></svg></button>
        <div class="searchbox s146 gap37"><svg class="i18"><use href="#search"/></svg><span>Search</span></div>
        <button class="btn w24 right"><svg class="i10"><use href="#chev-d"/></svg></button>
      </div>
      <div class="pbody">
        <div class="ptabs">
          <div class="pg pg1"><span class="pt"><svg class="i18"><use href="#ptool"/></svg></span></div>
          <div class="pg pg2">
            <span class="pt"><svg class="i18"><use href="#prender"/></svg></span>
            <span class="pt"><svg class="i18"><use href="#poutput"/></svg></span>
            <span class="pt"><svg class="i18"><use href="#vlayer"/></svg></span>
            <span class="pt"><svg class="i18"><use href="#scene"/></svg></span>
            <span class="pt"><svg class="i18"><use href="#pworld"/></svg></span>
          </div>
          <div class="pg pg3"><span class="pt"><svg class="i18"><use href="#pcoll"/></svg></span></div>
          <div class="pg pg4"><span class="pt"><svg class="i18"><use href="#pobj"/></svg></span></div>
          <div class="pactive"><svg class="i18"><use href="#pmod"/></svg></div>
        </div>
        <div class="pmain">
          <div class="pname"><svg class="i18 oi"><use href="#objmode"/></svg><span>PedalR</span><svg class="i18 pinr"><use href="#pin"/></svg></div>
          <div class="addmod"><span class="plus">+</span><span>Add Modifier</span></div>
        </div>
      </div>
    </section>
  </div>
</main>

<footer class="status">
  <svg class="m"><use href="#mousel"/></svg><span class="mtick"></span><span class="st">Pan</span>
  <svg class="m m2"><use href="#mouser"/></svg><span class="st">Options</span>
  <span class="version">4.4.3</span>
</footer>
<script src="script.js"></script>
</body>
</html>
```

FILE: styles.css
```css
* { box-sizing: border-box; }
html, body { margin: 0; padding: 0; }
body {
  width: 1920px; height: 1051px; overflow: hidden;
  background: #181818; color: #e6e6e6;
  font: 13.700px/1 "Inter", "Liberation Sans", sans-serif;
  font-variant-numeric: tabular-nums;
  display: flex; flex-direction: column;
}
.defs { position: absolute; width: 0; height: 0; }
svg { display: block; flex: none; }
.i10 { width: 10px; height: 10px; }
.i14 { width: 14px; height: 14px; }
.i16 { width: 16px; height: 16px; }
.i18 { width: 18px; height: 18px; }
.i22 { width: 22px; height: 22px; }

/* top bar */
.topbar { height: 34px; flex: none; display: flex; padding-left: 12px; position: relative; }
.logo { width: 22px; height: 15px; margin-top: 10px; color: #e6e6e6; }
.menus { display: flex; gap: 19px; margin-left: 10px; padding-top: 10px; color: #e0e0e0; width: 281px; }
.tabs { display: flex; align-items: flex-end; height: 33px; color: #a3a3a3; font-size: 13.650px; }
.tab { height: 26px; padding: 5px 12px 0; margin-right: 1px; background: #1f1f1f; border-radius: 6px 6px 0 0; }
.tab.active { background: #303030; color: #e6e6e6; padding-inline: 12px; }
.tab-add { height: 26px; width: 24px; padding-top: 3px; text-align: center; font-size: 20px; font-weight: 300; background: #1f1f1f; border-radius: 6px 6px 0 0; }
.scene-groups { margin-left: auto; display: flex; gap: 6px; padding: 4px 9px 0 0; height: 29px; }
.sgroup { display: flex; height: 25px; border-radius: 5px; overflow: hidden; }
.sicon { display: flex; align-items: center; justify-content: center; gap: 1px; background: #282828; }
.w39 { width: 39px; }
.sfield { display: flex; align-items: center; padding-left: 10px; background: #1d1d1d; position: relative; color: #e6e6e6; }
.w125 { width: 125px; }
.w100 { width: 100px; }
.scopy { width: 25px; display: flex; align-items: center; justify-content: center; background: #545454; }
.sx { width: 26px; display: flex; align-items: center; justify-content: center; background: #3a3a3a; color: #5c5c5c; }
.pinend { margin-left: auto; margin-right: 4px; color: #8a8a8a; }

/* workspace */
.workspace { flex: 1; display: flex; min-height: 0; }
.leftcol { width: 1587px; flex: none; display: flex; flex-direction: column; gap: 4px; }
.rightcol { width: 328px; margin-left: 4px; flex: none; display: flex; flex-direction: column; gap: 4px; }

/* viewport */
.viewport { flex: 1; position: relative; background: #3d3d3d; border-radius: 8px; overflow: hidden; min-height: 0; }
.canvas { position: absolute; left: 0; top: 0; width: 1587px; height: 912px; }
.vp-header, .vp-settings, .vp-body { position: relative; }
.vp-header { height: 33px; background: #303030; display: grid; grid-template-columns: 638px 1fr auto; align-items: center; padding: 0 11px 2px 0; }
.hleft { display: flex; align-items: center; gap: 8px; padding-left: 11px; }
.hcenter, .hright { display: flex; align-items: center; gap: 8px; }
.x1 { margin-left: 1px; }
.btn {
  height: 24px; font: inherit; color: #e6e6e6; background: #282828;
  border: 1px solid #3a3a3a; border-radius: 5px; padding: 0 4px;
  display: flex; align-items: center; justify-content: center; gap: 1px; flex: none;
}
.grow { flex: 1; text-align: left; margin-left: 5px; white-space: nowrap; }
.orient-btn .grow { margin-left: 9px; }
.w136 { width: 136px; }
.w95 { width: 95px; }
.w38 { width: 38px; }
.w123 { width: 123px; }
.w101 { width: 101px; padding-left: 7px; }
.w80 { width: 80px; padding-left: 4px; }
.w24 { width: 24px; }
.hm { color: #dcdcdc; white-space: nowrap; }
.hm.first { margin-left: 8px; }
.hleft .hm + .hm { margin-left: 11.500px; }
.seg { display: flex; height: 24px; border-radius: 5px; overflow: hidden; background: #282828; }
.sb { display: flex; align-items: center; justify-content: center; gap: 1px; height: 100%; }
.sb + .sb { border-left: 1px solid #3a3a3a; }
.w22 { width: 22px; } .w23 { width: 23px; } .w25 { width: 25px; } .w40 { width: 40px; }
.blue { background: #4772b3; color: #fff; }
.gray { background: #545454; color: #d0d0d0; }
.faint, .faint2 { background: #2b2b2b; color: #606060; }
.xdim { background: #3a3a3a; color: #5a5a5a; }

.vp-settings { height: 30px; display: flex; justify-content: space-between; }
.toolstrip { width: 389px; background: #383838; border-radius: 0 0 8px 0; display: flex; align-items: center; padding: 0 0 2px 11px; color: #c4c4c4; }
.toolstrip .btn { margin-left: 7px; }
.lbl { white-space: nowrap; }
.lbl.drag { margin-left: 13px; }
.optstrip { width: 102px; background: #383838; border-radius: 0 0 0 8px; padding: 2px 0 0 12px; }

.vp-body { display: flex; padding-top: 11px; }
.toolbar { width: 48px; margin-left: 11px; display: flex; flex-direction: column; gap: 8px; }
.tgroup { background: #282828; border-radius: 5px; overflow: hidden; }
.tool { display: block; height: 42px; position: relative; }
.g2 .tool { height: 42.500px; }
.tool + .tool { border-top: 1px solid #3d3d3d; }
.tool.on { background: #4772b3; }
.ti { width: 48px; height: 42px; }
.corner::after { content: ""; position: absolute; right: 4px; bottom: 4px; border: 3px solid transparent; border-right-color: #8f8f8f; border-bottom-color: #8f8f8f; }
.viewinfo { margin-left: 22px; margin-top: -3px; line-height: 22px; color: #f2f2f2; text-shadow: 0 0 2px #000; }
.ctx { word-spacing: 1.200px; }
.gizmo { position: absolute; left: 1490px; top: 56px; width: 100px; height: 120px; }
.gizmo-svg { width: 100px; height: 120px; overflow: visible; }
.gt { font: 700 13px "Inter", sans-serif; text-anchor: middle; fill: rgba(0,0,0,.6); }
.navbtns { position: absolute; left: 1542px; top: 176px; display: flex; flex-direction: column; gap: 3.600px; }
.nav { width: 34px; height: 34px; border-radius: 50%; background: #2e2e2e; display: flex; align-items: center; justify-content: center; }
.sidetab { position: absolute; left: 1577px; top: 82px; width: 10px; height: 15px; background: #474747; border-radius: 3px 0 0 3px; color: #d0d0d0; display: flex; align-items: center; justify-content: center; }
.sidetab svg { transform: scaleX(-1); }

/* timeline */
.timeline { height: 72px; flex: none; background: #1d1d1d; border-radius: 8px; overflow: hidden; position: relative; }
.tl-header { height: 31px; background: #303030; display: flex; align-items: center; padding: 0 11px 0 10px; }
.tl-menus { margin-left: 7px; border: 1px solid #3a3a3a; }
.w92 { width: 92px; gap: 6px; }
.w76 { width: 76px; gap: 6px; }
.tl-first { margin-left: 10px; }
.tl-second { margin-left: 18px; }
.tl-key { position: absolute; left: 679px; }
.tl-trans { position: absolute; left: 735px; }
.w245 { width: 24.500px; }
.gray2 { background: #545454; color: #e6e6e6; }
.sb.gray2 + .sb.gray2 { border-left-color: #3d3d3d; }
.frame-cur { margin-left: auto; width: 91px; height: 24px; background: #545454; border-radius: 4px; display: flex; align-items: center; justify-content: center; }
.tl-range { margin-left: 8px; }
.spread { justify-content: space-between; }
.w111 { width: 111px; padding: 0 17px 0 18px; }
.w106 { width: 106px; padding: 0 16px 0 19px; }
.tl-main { position: relative; height: 41px; }
.frames { display: flex; height: 28px; padding-left: 82.500px; color: #a8a8a8; align-items: center; padding-top: 3px; }
.frames span { width: 59px; text-align: center; flex: none; }
.badge { position: absolute; left: 43px; top: 4px; width: 31px; height: 21px; background: #4772b3; color: #fff; border-radius: 4px; display: flex; align-items: center; justify-content: center; }
.playhead { position: absolute; left: 58px; top: 25px; width: 2px; height: 16px; background: #4772b3; z-index: 1; }
.hscroll { margin: 0 12px 0 11px; height: 11px; background: #545454; border-radius: 6px; position: relative; }
.hscroll::before, .hscroll::after { content: ""; position: absolute; top: 1px; width: 9px; height: 9px; border-radius: 50%; background: #303030; }
.hscroll::before { left: 1px; }
.hscroll::after { right: 1px; }
.ticks { height: 2px; background: repeating-linear-gradient(90deg, #5a5a5a 0 1px, transparent 1px 59px) 52px 0; }
.tl-chev-l { position: absolute; left: -1px; top: 23px; color: #888; }
.tl-chev-r { position: absolute; right: 0; top: 23px; color: #888; transform: scaleX(-1); }

/* editors on the right */
.outliner { height: 619px; flex: none; display: flex; flex-direction: column; background: #282828; border-radius: 8px; overflow: hidden; position: relative; }
.ed-header { height: 33px; flex: none; background: #303030; display: flex; align-items: center; padding: 0 8px 2px 9px; }
.gap7 { margin-left: 7px; }
.gap20 { margin-left: 20px; }
.gap37 { margin-left: 37px; }
.right { margin-left: auto; }
.searchbox { height: 24px; background: #1d1d1d; border: 1px solid #3a3a3a; border-radius: 6px; display: flex; align-items: center; gap: 6px; padding-left: 5px; color: #7a7a7a; }
.searchbox svg { color: #d0d0d0; }
.s147 { width: 147px; }
.s146 { width: 146px; }
.tree { flex: 1; position: relative; background: repeating-linear-gradient(180deg, #282828 0 25px, #2b2b2b 25px 50px); }
.row { height: 25px; display: flex; align-items: center; color: #bdbdbd; }
.rmain { width: 241px; flex: none; overflow: hidden; display: flex; align-items: center; padding-left: 55px; height: 100%; }
.rmain.coll { padding-left: 31px; }
.chev { width: 12px; height: 12px; margin-right: 10px; color: #c0c0c0; flex: none; }
.chev.cd { margin-right: 6px; }
.name { margin-left: 9px; white-space: nowrap; }
.name.sc { margin-left: 10px; color: #c4c4c4; }
.name.bright { margin-left: 5px; color: #e6e6e6; }
.sc-ic { margin-left: 27px; color: #d0d0d0; }
.collbox { width: 25px; height: 23px; background: #545454; border-radius: 5px; display: flex; align-items: center; justify-content: center; color: #e0e0e0; }
.data { margin-left: 28px; }
.data.next { margin-left: 6px; }
.rend { display: flex; align-items: center; margin-left: 29px; }
.cam { margin-left: 7px; }
.check { width: 13px; height: 13px; background: #e6e6e6; border-radius: 3px; margin-left: -22px; margin-right: 9px; }
.activebox { background: #545454; border-radius: 4px; box-shadow: 0 0 0 3px #545454; }
.treeline { position: absolute; left: 35px; top: 55px; width: 1px; height: 413px; background: #6b6b6b; }
.outl-scroll { position: absolute; left: 9px; right: 22px; bottom: 1px; height: 4px; background: #3d3d3d; border-radius: 2px; }

.properties { flex: 1; min-height: 0; display: flex; flex-direction: column; background: #303030; border-radius: 8px; overflow: hidden; }
.phead { height: 31px; padding-right: 9px; }
.pbody { flex: 1; display: flex; min-height: 0; }
.ptabs { width: 33px; flex: none; background: #1d1d1d; color: #c4c4c4; overflow: hidden; }
.pg { border-bottom: 1px solid #2a2a2a; }
.pg1 { height: 45px; padding-top: 9px; }
.pg2 { height: 184px; padding-top: 8px; }
.pg3 { height: 44px; padding-top: 8px; }
.pg4 { height: 45px; padding-top: 9px; border-bottom: 0; }
.pt { display: flex; height: 35.200px; align-items: center; justify-content: center; padding-right: 2px; }
.pg1 .pt, .pg3 .pt, .pg4 .pt { height: 36px; }
.pactive { height: 40px; background: #303030; padding: 3px 0 0 8px; }
.pmain { flex: 1; padding: 13px 10px 0 11px; }
.pname { display: flex; align-items: center; height: 18px; }
.pname span { margin-left: 13px; color: #dcdcdc; }
.oi { color: #eee; }
.pinr { margin-left: auto; margin-right: 2px; color: #8a8a8a; }
.addmod { margin-top: 24px; height: 23px; background: #545454; border-radius: 4px; display: flex; align-items: center; justify-content: center; position: relative; color: #e6e6e6; padding-left: 22px; font-size: 13.400px; }
.plus { position: absolute; left: 7px; top: 2px; font-size: 20px; font-weight: 300; }

/* status bar */
.status { height: 29px; flex: none; display: flex; align-items: center; color: #8f8f8f; padding-left: 10px; }
.m { width: 20px; height: 24px; color: #9a9a9a; }
.mtick { width: 1px; height: 6px; background: #9a9a9a; margin-right: 3px; margin-bottom: 6px; }
.m2 { margin-left: 12px; }
.st { margin-left: 2px; }
.version { margin-left: auto; margin-right: 16px; }
```

FILE: script.js
```js
// Floor grid of the viewport: two families of lines meeting at the vanishing points.
(function () {
  var group = document.getElementById('grid');
  var parts = [];
  var i;
  for (i = -1; i <= 45; i++) {
    if (i === 0) continue;
    var inv = 0.001339 + i * 0.000408;
    var d = 1 / inv;
    var y0 = 43 + d * 2769 / 2179;
    var y1 = 43 + d * (2769 - 1587) / 2179;
    parts.push('M0 ' + y0.toFixed(1) + 'L1587 ' + y1.toFixed(1));
  }
  for (i = -14; i <= 20; i++) {
    if (i === 0) continue;
    var m = 1.2327 + i * 0.537;
    var x0 = 77 + m * 37;
    var x1 = 77 + m * 903;
    parts.push('M' + x0.toFixed(1) + ' 80L' + x1.toFixed(1) + ' 946');
  }
  var path = document.createElementNS('http://www.w3.org/2000/svg', 'path');
  path.setAttribute('d', parts.join(''));
  group.appendChild(path);
})();
```
